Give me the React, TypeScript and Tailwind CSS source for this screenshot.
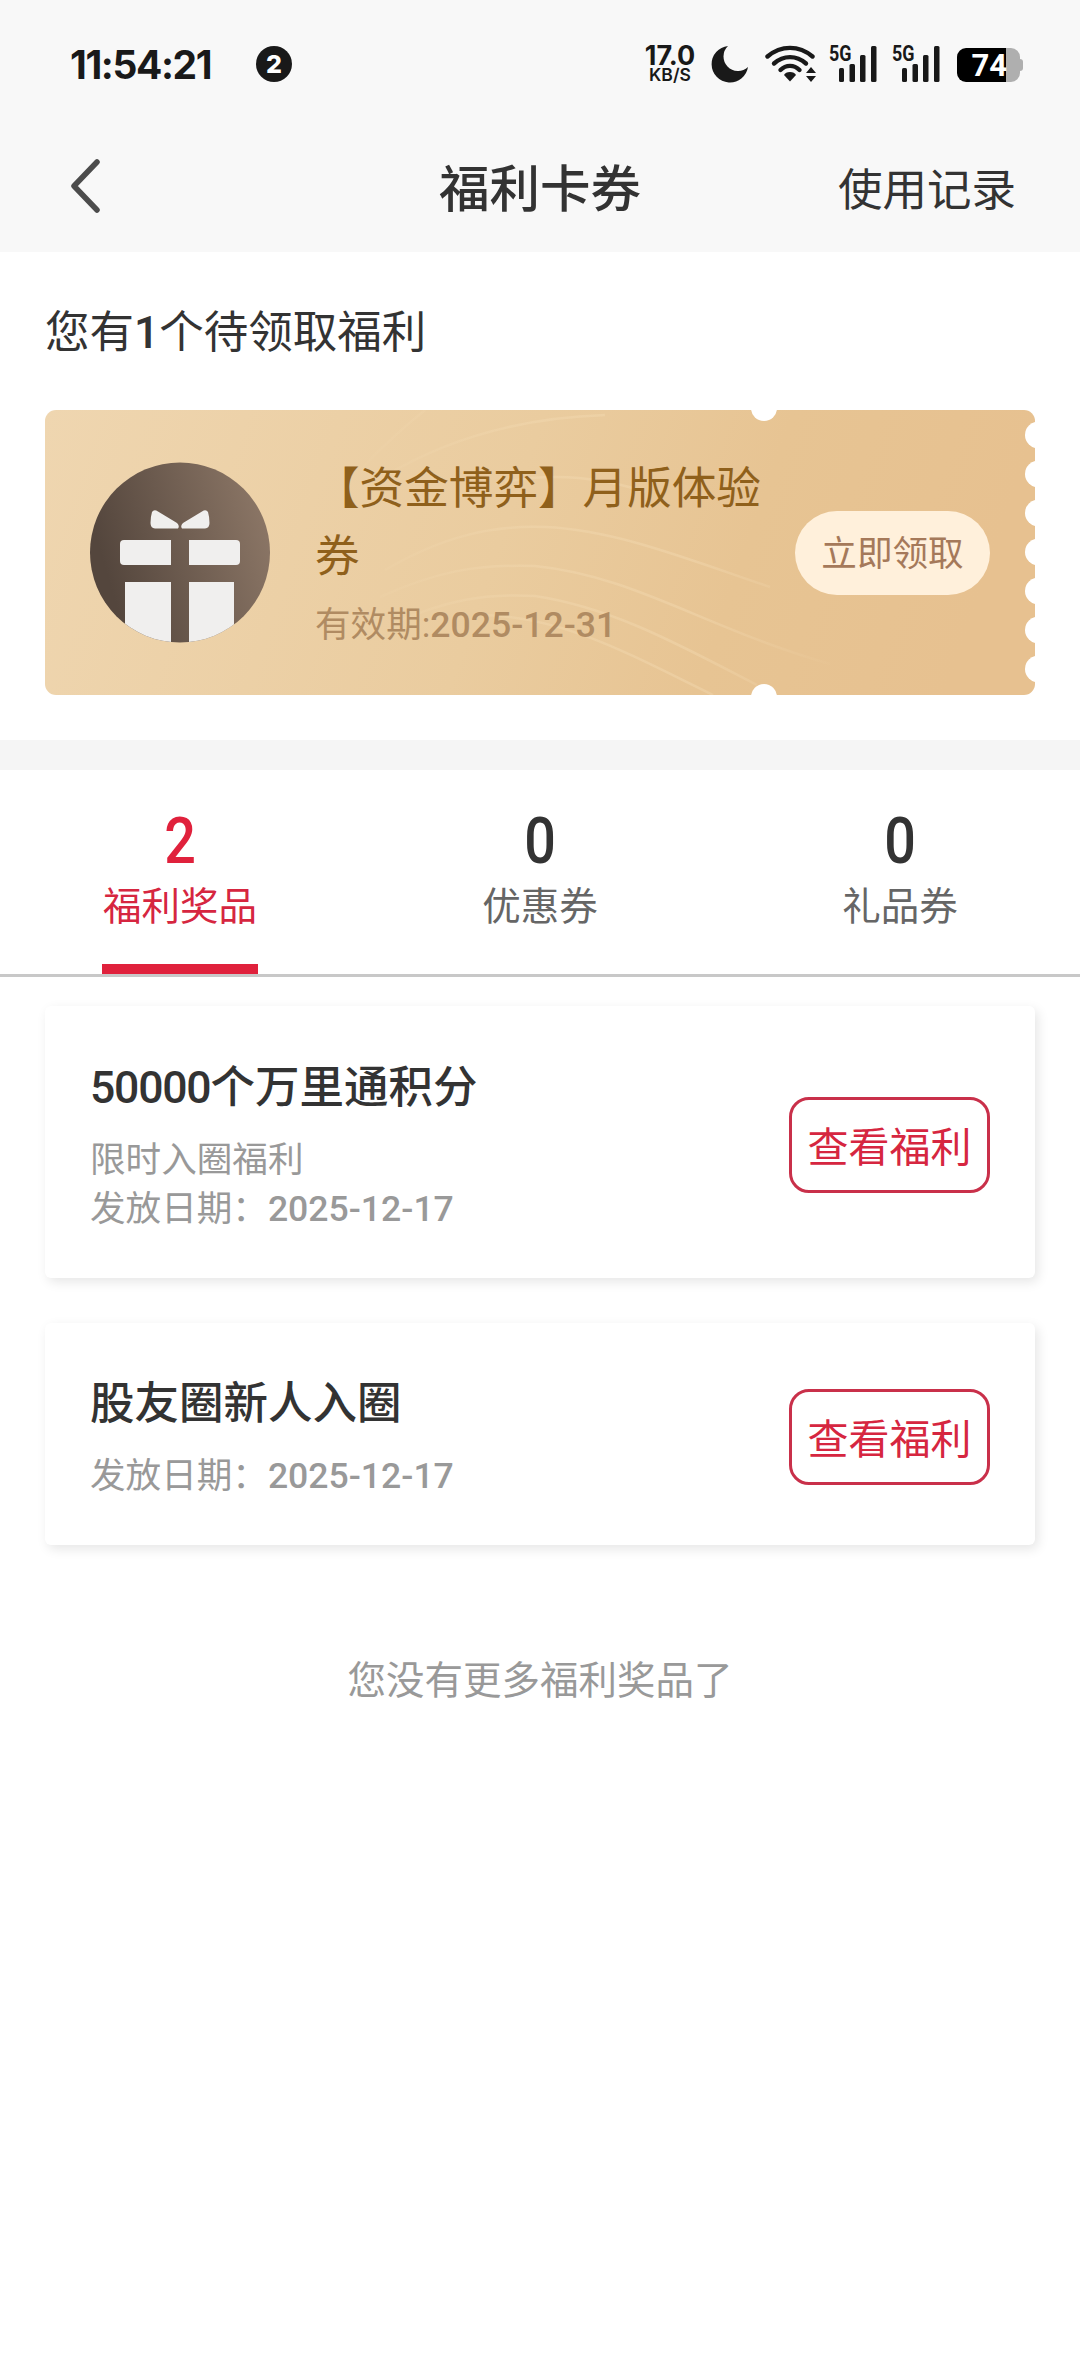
import clsx from 'clsx';

type Tab = {
  label: string;
  count: number;
};

type Prize = {
  amount?: string;
  title: string;
  desc?: string;
  date: string;
};

const TABS: Tab[] = [
  { label: '福利奖品', count: 2 },
  { label: '优惠券', count: 0 },
  { label: '礼品券', count: 0 },
];

const PRIZES: Prize[] = [
  { amount: '50000', title: '个万里通积分', desc: '限时入圈福利', date: '2025-12-17' },
  { title: '股友圈新人入圈', date: '2025-12-17' },
];

const NOTCHES = [25, 64, 103, 142, 181, 220, 259];

function SignalSvg() {
  return (
    <svg width="50" height="50" viewBox="0 -6 50 50" fill="#191919">
      <text
        x="0"
        y="15.7"
        fontSize="22.5"
        fontWeight="700"
        textLength="22.5"
        lengthAdjust="spacingAndGlyphs"
        fontFamily="Roboto, sans-serif"
      >
        5G
      </text>
      <rect x="10" y="23" width="5" height="14" rx="1.5" />
      <rect x="20.5" y="19" width="5.5" height="18" rx="1.5" />
      <rect x="31" y="10" width="5.5" height="27" rx="1.5" />
      <rect x="42" y="1" width="5.5" height="36" rx="1.5" />
    </svg>
  );
}

function WifiSvg() {
  return (
    <svg width="52" height="38" viewBox="0 0 52 38" fill="none">
      <g stroke="#191919" strokeWidth="4.4" strokeLinecap="round">
        <path d="M2.5 11.5C16 0 34 0 47.5 11.5" />
        <path d="M9 18.5C18.5 10 31.5 10 41 18.5" />
        <path d="M15.5 25C21 19.5 29 19.5 34.5 25" />
      </g>
      <path d="M25 27c3 0 5 1.2 6 3l-6 6.500-6-6.500c1-1.800 3-3 6-3z" fill="#191919" />
      <path d="M46 22l5 6h-10zM46 37l5-6h-10z" fill="#191919" />
    </svg>
  );
}

function StatusBar() {
  return (
    <div className="flex h-32 items-center justify-between pl-[70px] pr-[57px] text-[#191919]">
      <div className="flex items-center">
        <span className="w-[186px] font-['Inter',sans-serif] text-[39px] font-bold leading-none tracking-[-1.4px]">
          11:54:21
        </span>
        <span className="flex size-9 items-center justify-center rounded-full bg-[#191919] font-['Inter',sans-serif] text-[25px] font-extrabold leading-none text-white">
          2
        </span>
      </div>
      <div className="flex items-center">
        <div className="mr-[14px] flex w-[54px] flex-col items-center font-['Inter',sans-serif] font-bold">
          <span className="text-[27px] leading-[21px]">17.0</span>
          <span className="text-[17.5px] leading-[17px] font-semibold">KB/S</span>
        </div>
        <svg width="38" height="38" viewBox="0 0 38 38" className="mr-[16px]">
          <path
            d="M17 1A18.3 18.3 0 1 0 37 22A14.5 14.5 0 0 1 17 1z"
            fill="#191919"
          />
        </svg>
        <WifiSvg />
        <div className="ml-[12px] flex gap-[13px]">
          <SignalSvg />
          <SignalSvg />
        </div>
        <div className="mt-[2px] ml-[15px] flex items-center">
          <div className="flex h-[34px] w-[63px] items-center justify-end overflow-hidden rounded-[9px] bg-[linear-gradient(90deg,#000_49px,#afafaf_49px)] pr-[13px] font-['Roboto',sans-serif] text-[31px] font-bold leading-none text-white">
            74
          </div>
          <div className="h-[12px] w-[3px] rounded-r-[3px] bg-[#afafaf]" />
        </div>
      </div>
    </div>
  );
}

function NavBar() {
  return (
    <div className="grid h-[124px] grid-cols-3 items-center px-[64px] text-[#333]">
      <svg width="30" height="54" viewBox="0 0 30 54" fill="none" className="mb-[8px] ml-[6px]">
        <path
          d="M27 3L4 27l23 24"
          stroke="#4c4c4c"
          strokeWidth="5.5"
          strokeLinecap="round"
          strokeLinejoin="round"
        />
      </svg>
      <h1 className="text-center text-[50.5px] font-medium leading-none">福利卡券</h1>
      <button className="pt-[3px] text-right text-[44.5px] leading-none">使用记录</button>
    </div>
  );
}

function GiftSvg() {
  return (
    <svg width="180" height="182" viewBox="0 0 180 182">
      <defs>
        <linearGradient id="gift-bg" x1="0" y1="0.3" x2="1" y2="0">
          <stop offset="0" stopColor="#54463d" />
          <stop offset="1" stopColor="#917b6a" />
        </linearGradient>
        <clipPath id="gift-clip">
          <circle cx="90" cy="90.5" r="90" />
        </clipPath>
      </defs>
      <g clipPath="url(#gift-clip)">
        <rect width="180" height="182" fill="url(#gift-bg)" />
        <g fill="#f0efee">
          <path d="M62 50Q64 47 68 49.500L87 61Q90 64 88 66.500H65Q60.500 66 60.500 61Q60.500 55 62 50z" />
          <path d="M118 50Q116 47 112 49.500L93 61Q90 64 92 66.500H115Q119.500 66 119.500 61Q119.500 55 118 50z" />
          <path d="M34 78H81V103H34Q30 103 30 99V82Q30 78 34 78z" />
          <path d="M99 78H146Q150 78 150 82V99Q150 103 146 103H99z" />
          <path d="M35 120H81V182H35z" />
          <path d="M99 120H144V182H99z" />
        </g>
      </g>
    </svg>
  );
}

function CouponBg() {
  return (
    <svg
      className="absolute inset-0"
      width="990"
      height="285"
      viewBox="0 0 990 285"
      fill="none"
    >
      <defs>
        <linearGradient id="coupon-bg" x1="0" y1="0" x2="1" y2="0.1">
          <stop offset="0" stopColor="#efd6b0" />
          <stop offset="0.5" stopColor="#eacc9f" />
          <stop offset="0.75" stopColor="#e7c493" />
          <stop offset="1" stopColor="#e7c190" />
        </linearGradient>
        <linearGradient id="coupon-line" gradientUnits="userSpaceOnUse" x1="280" y1="0" x2="800" y2="0">
          <stop offset="0" stopColor="#f6dfb8" stopOpacity="0" />
          <stop offset="0.4" stopColor="#f6dfb8" stopOpacity="0.3" />
          <stop offset="0.7" stopColor="#f6dfb8" stopOpacity="0.35" />
          <stop offset="1" stopColor="#f6dfb8" stopOpacity="0" />
        </linearGradient>
      </defs>
      <rect width="990" height="285" rx="11" fill="url(#coupon-bg)" />
      <g stroke="url(#coupon-line)" strokeWidth="2.5">
        <path d="M318 57C338 36 355 20 380 0" />
        <path d="M340 66C400 30 470 8 560 5" />
        <path d="M460 72C510 62 560 68 600 82" />
        <path d="M340 160C400 125 450 115 500 117C570 120 640 148 725 177" />
        <path d="M335 187C390 162 430 154 490 156C590 166 660 218 785 254" />
        <path d="M345 215C400 190 440 183 490 186C570 198 640 238 712 275" />
        <path d="M440 205C520 208 580 242 668 285" />
      </g>
      <g fill="#fff">
        <circle cx="719" cy="-2" r="13" />
        <circle cx="719" cy="287" r="13" />
        {NOTCHES.map((y) => (
          <circle key={y} cx="993.5" cy={y} r="13.5" />
        ))}
      </g>
    </svg>
  );
}

function Coupon() {
  return (
    <div className="relative h-[285px]">
      <CouponBg />
      <div className="relative flex h-full items-center px-[45px]">
        <GiftSvg />
        <div className="ml-[45px] w-[460px] pt-[2px]">
          <p className="text-[44.6px] leading-[68px] text-[#8f601b]">【资金博弈】月版体验券</p>
          <p className="mt-[8px] text-[35.6px] leading-[53px] text-[#b08b62]">
            有效期:<span className="font-medium">2025-12-31</span>
          </p>
        </div>
        <button className="ml-auto h-[84px] w-[195px] rounded-full bg-[#fff0db] pt-[4px] text-[35.6px] leading-none text-[#a5795a]">
          立即领取
        </button>
      </div>
    </div>
  );
}

function PrizeCard({ amount, title, desc, date }: Prize) {
  return (
    <div
      className={clsx(
        'flex items-center justify-between rounded-[6px] bg-white px-[45px] shadow-[3px_4px_12px_rgba(0,0,0,0.1)]',
        desc ? 'h-[272px]' : 'h-[222px]',
      )}
    >
      <div className="pt-[4px]">
        <h2 className="text-[44.5px] font-medium leading-[66px] text-[#333]">
          {amount && <span className="tracking-[-1.2px]">{amount}</span>}
          {title}
        </h2>
        <div className="mt-[15px] text-[35.6px] leading-[49px] text-[#999]">
          {desc && <p>{desc}</p>}
          <p>
            发放日期：<span className="font-medium">{date}</span>
          </p>
        </div>
      </div>
      <button className="mt-[6px] h-24 w-[201px] rounded-[20px] border-3 border-[#c9304a] pt-[7px] text-[41px] leading-none text-[#d62640]">
        查看福利
      </button>
    </div>
  );
}

export default function App() {
  return (
    <div className="min-h-[2376px] w-[1080px] bg-white font-['Roboto','Noto_Sans_CJK_SC',sans-serif] text-[#333]">
      <header className="bg-[#f8f8f8]">
        <StatusBar />
        <NavBar />
      </header>

      <section className="h-[488px] px-[45px]">
        <p className="pt-[48px] text-[44.5px] leading-[66px]">
          您有<span className="font-medium">1</span>个待领取福利
        </p>
        <div className="mt-[44px]">
          <Coupon />
        </div>
      </section>

      <div className="h-[30px] bg-[#f5f5f5]" />

      <nav className="grid h-[207px] grid-cols-3 border-b-3 border-[#c8c8c8]">
        {TABS.map((tab, i) => (
          <button key={tab.label} className="flex flex-col items-center pt-[37px]">
            <span
              className={clsx(
                'scale-x-[0.87] text-[64px] font-medium leading-[70px]',
                i === 0 ? 'text-[#e0213c]' : 'text-[#333]',
              )}
            >
              {tab.count}
            </span>
            <span
              className={clsx(
                'mt-px text-[38.5px] leading-[58px]',
                i === 0 ? 'text-[#d62640]' : 'text-[#666]',
              )}
            >
              {tab.label}
            </span>
            {i === 0 && <span className="mt-auto h-[10px] w-[156px] bg-[#e0213c]" />}
          </button>
        ))}
      </nav>

      <main className="flex flex-col gap-[45px] px-[45px] pt-[29px]">
        {PRIZES.map((prize) => (
          <PrizeCard key={prize.title} {...prize} />
        ))}
      </main>
      <p className="mt-[107px] text-center text-[38.5px] leading-[58px] text-[#999]">
        您没有更多福利奖品了
      </p>
    </div>
  );
}
